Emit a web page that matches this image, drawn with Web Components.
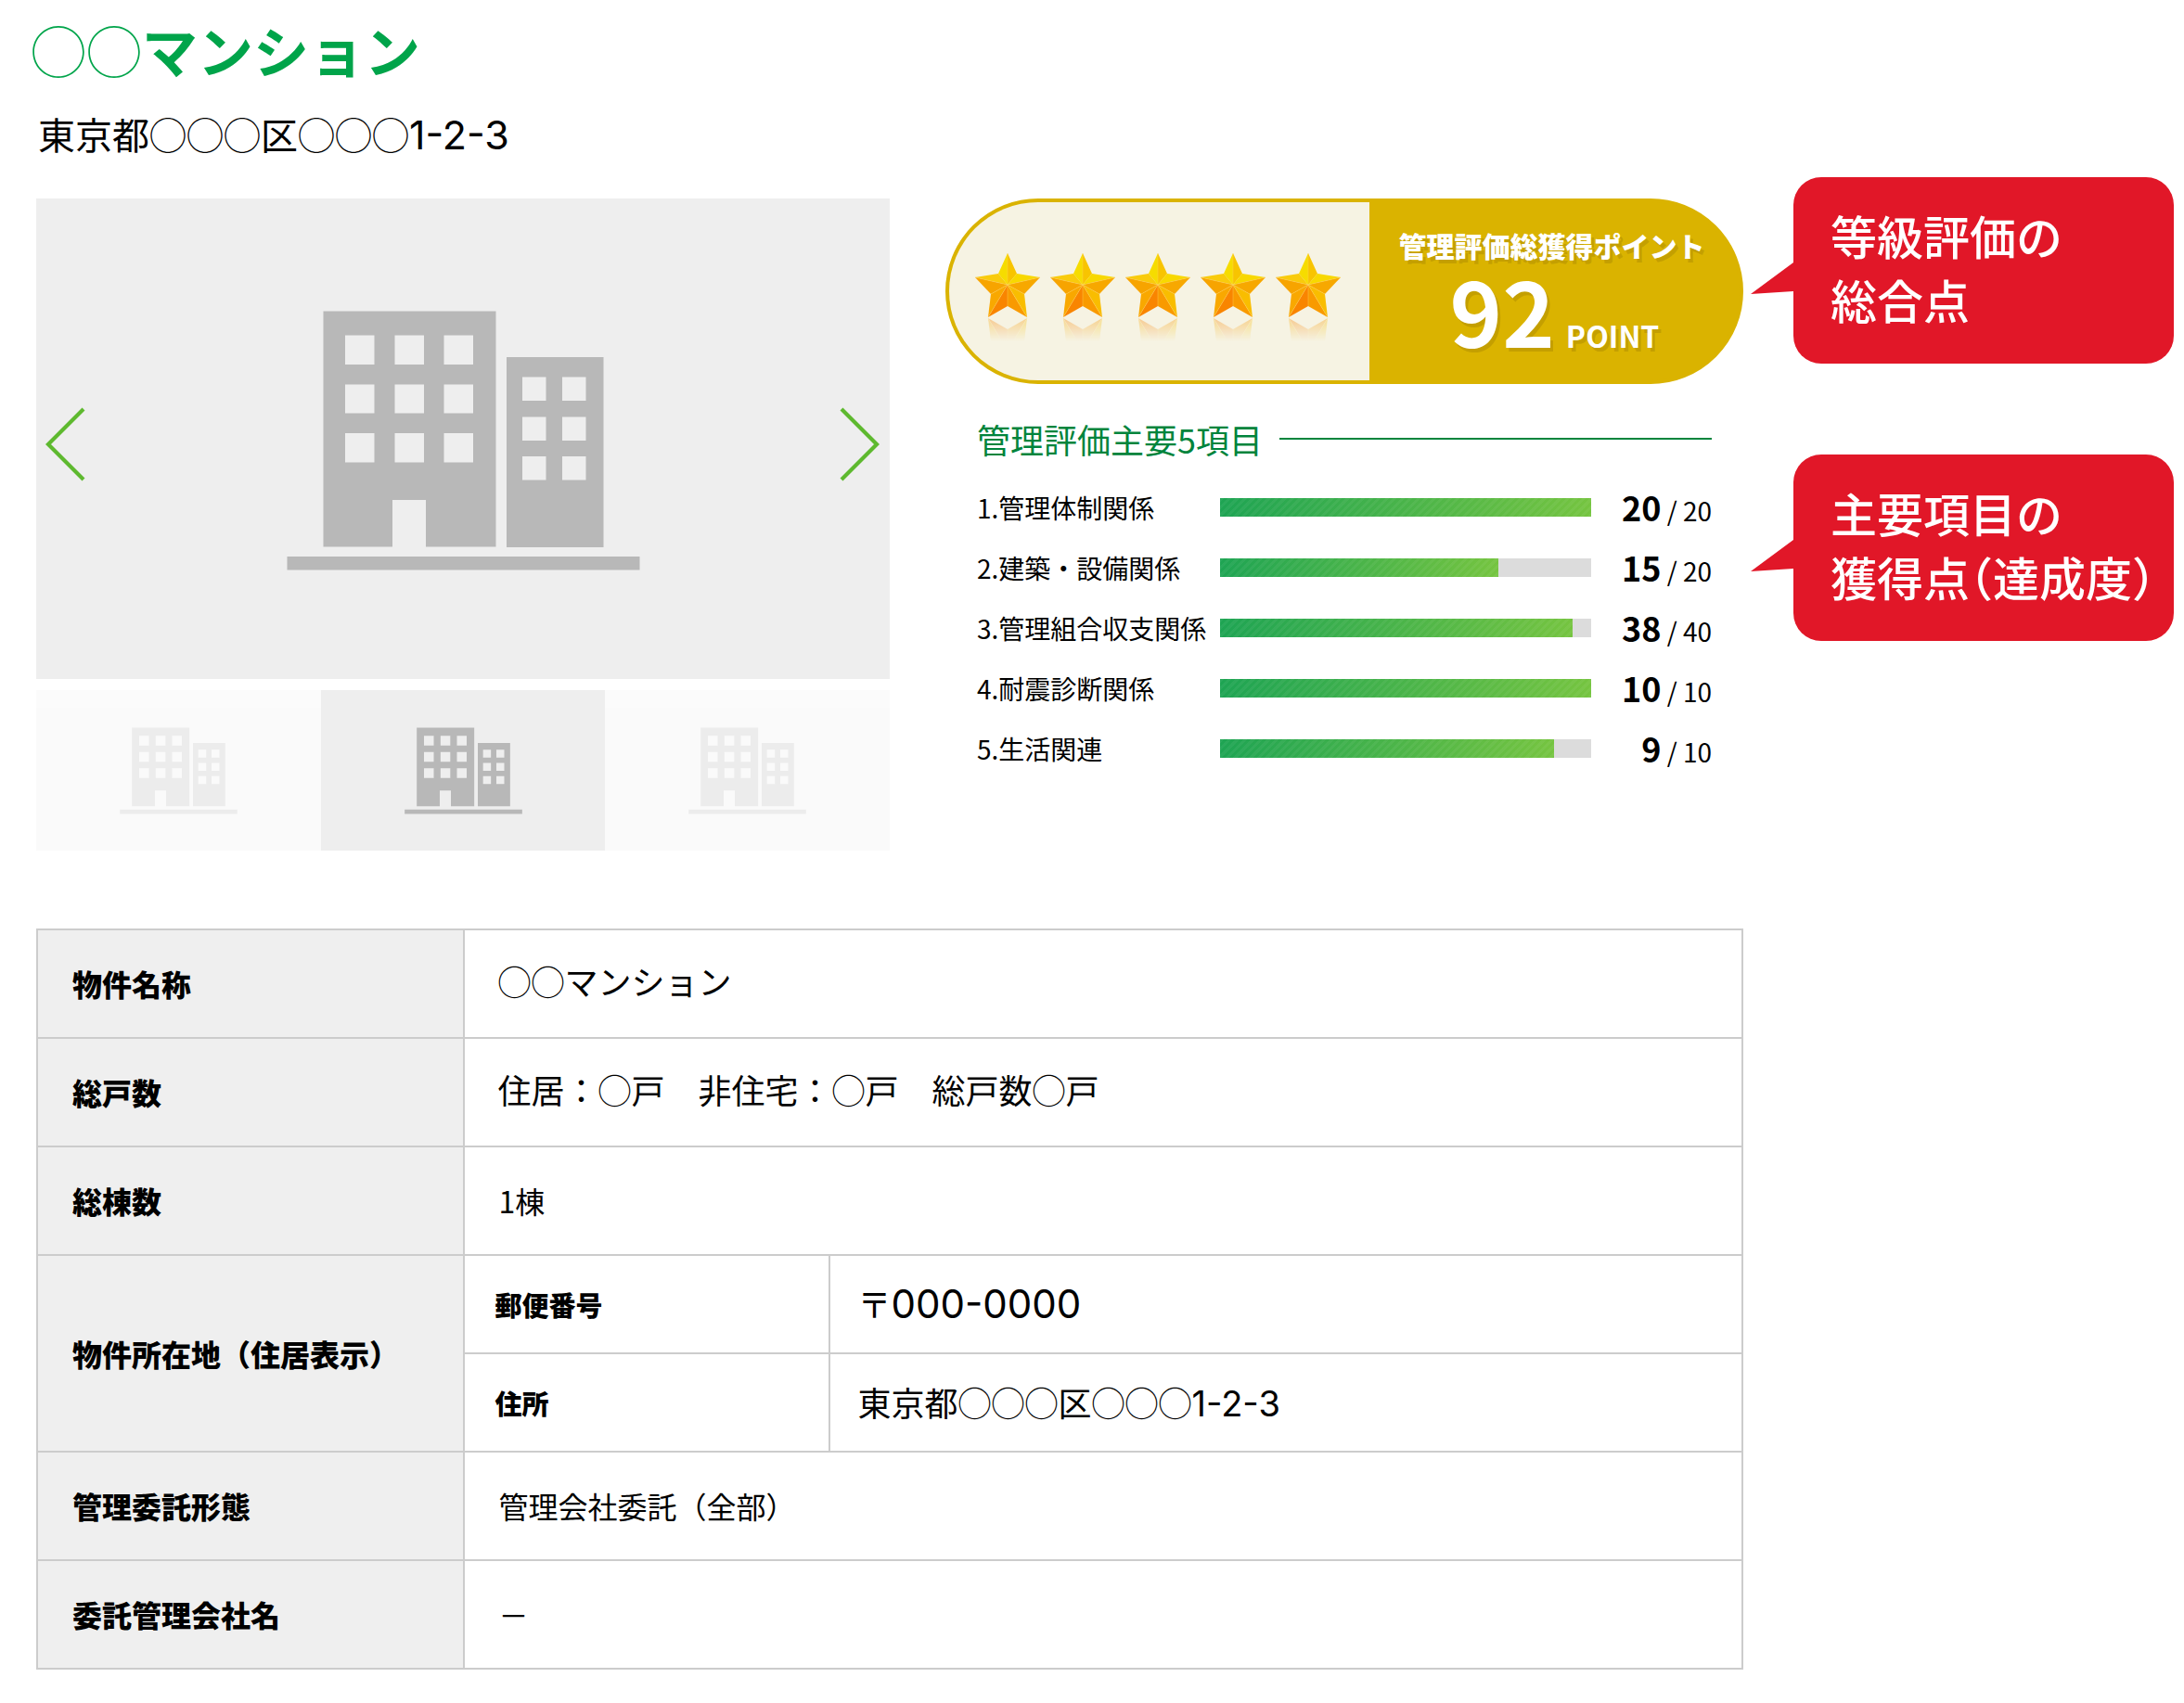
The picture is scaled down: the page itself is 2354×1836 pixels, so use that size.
<!DOCTYPE html>
<html lang="ja">
<head>
<meta charset="utf-8">
<title>◯◯マンション</title>
<style>
  body { margin: 0; background: #fff; color: #000; font-family: "Noto Sans CJK JP", sans-serif; }
</style>
</head>
<body>
<property-page></property-page>

<template id="property-page">
  <style>
    :host { display: grid; grid-template-columns: minmax(0, 1fr) 410px; column-gap: 54px; padding: 0 11px 36px 39px; }
    .top { display: grid; grid-template-columns: 920fr 860fr; column-gap: 60px; margin-bottom: 84px; }
    .num { font-family: Inter, sans-serif; font-size: 43px; }
    aside { display: flex; flex-direction: column; gap: 98px; padding-top: 191px; }
  </style>
  <main>
    <property-heading><span slot="address">東京都◯◯◯区◯◯◯<span class="num">1-2-3</span></span></property-heading>
    <div class="top">
      <photo-gallery></photo-gallery>
      <section>
        <score-badge points="92"></score-badge>
        <rating-list>管理評価主要5項目</rating-list>
      </section>
    </div>
    <property-table></property-table>
  </main>
  <aside>
    <call-out>等級評価の<br>総合点</call-out>
    <call-out>主要項目の<br>獲得点（達成度）</call-out>
  </aside>
</template>

<template id="property-heading">
  <style>
    :host { display: block; height: 214px; box-sizing: border-box; padding-top: 8px; }
    h1 { margin: 0 0 0 -6px; font-size: 60px; line-height: 90px; font-weight: 700; color: #00a44a; }
    h1 span { font-weight: 300; }
    p { margin: 16px 0 0 2px; font-size: 40px; line-height: 60px; }
  </style>
  <h1><span>◯◯</span>マンション</h1>
  <p><slot name="address"></slot></p>
</template>

<template id="building-picture">
  <style>
    :host { display: block; background: #eee; }
    svg { display: block; width: 100%; }
  </style>
  <svg viewBox="0 0 920 518" aria-hidden="true">
    <g transform="translate(270.5 121.5)" fill="#b8b8b8" fill-rule="evenodd">
      <path d="M39 0h186v254h-75.500v-50.500h-36v50.500h-74.500z
        M62.500 26v31.500h31.500v-31.500z M116 26v31.500h31.500v-31.500z M169 26v31.500h31.500v-31.500z
        M62.500 79v31h31.500v-31z M116 79v31h31.500v-31z M169 79v31h31.500v-31z
        M62.500 131.500v31.500h31.500v-31.500z M116 131.500v31.500h31.500v-31.500z M169 131.500v31.500h31.500v-31.500z"/>
      <path d="M236.500 49.500h104.500v205h-104.500z
        M253.500 71v25.500h25.500v-25.500z M296.500 71v25.500h25.500v-25.500z
        M253.500 114v25.500h25.500v-25.500z M296.500 114v25.500h25.500v-25.500z
        M253.500 156.500v25.500h25.500v-25.500z M296.500 156.500v25.500h25.500v-25.500z"/>
      <path d="M0 264.500h380v14.500h-380z"/>
    </g>
  </svg>
</template>

<template id="photo-gallery">
  <style>
    :host { display: block; }
    .stage { position: relative; }
    button { border: 0; padding: 0; margin: 0; background: none; cursor: pointer; display: block; }
    .arrow { position: absolute; top: 220px; width: 48px; height: 90px; }
    .prev { left: 8px; }
    .next { right: 8px; }
    .arrow svg { display: block; width: 100%; height: 100%; }
    .thumbs { display: grid; grid-template-columns: repeat(3, 1fr); margin-top: 12px; }
    .thumbs button { opacity: .25; }
    .thumbs button[aria-current] { opacity: 1; }
  </style>
  <div class="stage">
    <building-picture></building-picture>
    <button class="arrow prev" aria-label="前へ"><svg viewBox="0 0 48 90"><path d="M43 7 5 45 43 83" fill="none" stroke="#5eb92f" stroke-width="4.200"/></svg></button>
    <button class="arrow next" aria-label="次へ"><svg viewBox="0 0 48 90"><path d="M4 7 42 45 4 83" fill="none" stroke="#5eb92f" stroke-width="4.200"/></svg></button>
  </div>
  <div class="thumbs">
    <button aria-label="写真1"><building-picture></building-picture></button>
    <button aria-label="写真2" aria-current="true"><building-picture></building-picture></button>
    <button aria-label="写真3"><building-picture></building-picture></button>
  </div>
</template>

<template id="gold-star">
  <style>
    :host { display: block; width: 72px; height: 96px; }
    svg { display: block; width: 100%; height: 100%; }
  </style>
  <svg viewBox="0 0 72 96" aria-hidden="true">
    <defs>
      <linearGradient id="fade" x1="0" y1="0" x2="0" y2="1">
        <stop offset="0" stop-color="#fff" stop-opacity=".38"/><stop offset="1" stop-color="#fff" stop-opacity="0"/>
      </linearGradient>
      <mask id="m" maskUnits="userSpaceOnUse" x="0" y="70" width="72" height="26"><rect y="70" width="72" height="26" fill="url(#fade)"/></mask>
      <g id="s">
        <path d="M36 1 36 35 26 23z" fill="#f6dc00"/>
        <path d="M36 1 46 23 36 35z" fill="#f8c400"/>
        <path d="M26 23 36 35 1 27z" fill="#f9cb0c"/>
        <path d="M1 27 36 35 18 45z" fill="#f7a400"/>
        <path d="M71 27 36 35 46 23z" fill="#f8d800"/>
        <path d="M71 27 54 45 36 35z" fill="#f7a800"/>
        <path d="M18 45 36 35 15 70z" fill="#f9a800"/>
        <path d="M15 70 36 35 36 58z" fill="#f98500"/>
        <path d="M36 58 36 35 57 70z" fill="#f99a00"/>
        <path d="M57 70 36 35 54 45z" fill="#f9bd00"/>
        <path d="M36 1V58M36 35 15 70M36 35 57 70M36 35 18 45M36 35 54 45M36 35 1 27M36 35 71 27" stroke="#ffd25a" stroke-width=".6" fill="none" opacity=".7"/>
      </g>
    </defs>
    <use href="#s"/>
    <g mask="url(#m)"><use href="#s" transform="matrix(1 0 0 -1 0 141)"/></g>
  </svg>
</template>

<template id="score-badge">
  <style>
    :host { display: flex; box-sizing: border-box; height: 200px; border: 4px solid #dab300; border-radius: 100px; overflow: hidden; background: #dab300; color: #fff; }
    .stars { flex: 452 1 0; display: flex; justify-content: center; align-items: center; gap: 9px; background: #f6f3e3; box-sizing: border-box; padding-top: 12px; padding-right: 2px; }
    .points { flex: 400 1 0; display: flex; flex-direction: column; align-items: center; text-shadow: 3px 4px 0 rgba(120, 90, 0, .22); font-weight: 700; }
    h2 { margin: 24px 6px 0 0; font-size: 30px; line-height: 44px; font-weight: 900; white-space: nowrap; }
    p { display: flex; align-items: baseline; gap: 12px; margin: 0; line-height: 96px; font-size: 32px; white-space: nowrap; }
    b { font-size: 96px; font-weight: 700; }
  </style>
  <div class="stars" role="img" aria-label="5つ星"><gold-star></gold-star><gold-star></gold-star><gold-star></gold-star><gold-star></gold-star><gold-star></gold-star></div>
  <div class="points"><h2>管理評価総獲得ポイント</h2><p><b></b>POINT</p></div>
</template>

<template id="rating-list">
  <style>
    :host { display: block; padding: 0 34px; }
    h2 { display: flex; align-items: center; gap: 18px; margin: 31px 0 13px; font-size: 36px; line-height: 56px; font-weight: 400; color: #00843c; white-space: nowrap; }
    h2::after { content: ""; flex: 1; height: 2px; background: #00843c; }
  </style>
  <h2><slot></slot></h2>
  <rating-row label="1.管理体制関係" score="20" max="20"></rating-row>
  <rating-row label="2.建築・設備関係" score="15" max="20"></rating-row>
  <rating-row label="3.管理組合収支関係" score="38" max="40"></rating-row>
  <rating-row label="4.耐震診断関係" score="10" max="10"></rating-row>
  <rating-row label="5.生活関連" score="9" max="10"></rating-row>
</template>

<template id="rating-row">
  <style>
    :host { display: grid; grid-template-columns: 262px 1fr 130px; align-items: center; height: 65px; font-size: 28px; line-height: 40px; white-space: nowrap; }
    .bar { height: 20px; background: #dcdcdc; }
    .fill { height: 100%; background: repeating-linear-gradient(135deg, rgba(255,255,255,.05) 0 3px, transparent 3px 6px), linear-gradient(90deg, #1ea453, #75c440); }
    .score { text-align: right; padding-top: 2px; }
    b { font-size: 36px; }
  </style>
  <span class="label"></span>
  <div class="bar" role="meter" aria-valuemin="0"><div class="fill"></div></div>
  <span class="score"><b></b> / <span class="max"></span></span>
</template>

<template id="call-out">
  <style>
    :host { display: block; position: relative; box-sizing: border-box; padding: 28px 0 35px 40px; border-radius: 30px; background: #e11728; color: #fff; font-size: 50px; line-height: 69px; font-weight: 500; white-space: nowrap; font-feature-settings: "halt"; }
    svg { position: absolute; right: 100%; top: 92px; width: 46px; height: 35px; }
  </style>
  <svg viewBox="0 0 46 35" aria-hidden="true"><path d="M46 0 0 34 46 31z" fill="#e11728"/></svg>
  <slot></slot>
</template>

<template id="property-table">
  <style>
    :host { display: block; }
    table { width: 100%; border-collapse: collapse; table-layout: fixed; }
    th, td { border: 2px solid #ccc; box-sizing: border-box; padding: 0 30px 0 37px; height: 117px; text-align: left; vertical-align: middle; font-size: 32px; line-height: 48px; font-weight: 400; }
    th { background: #efefef; font-weight: 900; }
    td.large { padding: 0 30px 6px 36px; }
    .large { font-size: 36px; }
    .sub th, .sub td { height: 106px; }
    .sub .inner { background: none; font-size: 29px; padding-left: 33px; }
    .sub .inner + td { padding: 0 30px; }
    .num { font-family: Inter, sans-serif; font-size: 38px; }
    .zip { font-family: Inter, sans-serif; font-size: 42px; }
    .c1 { width: 25%; } .c2 { width: 394px; }
  </style>
  <table>
    <colgroup><col class="c1"><col class="c2"><col></colgroup>
    <tr><th scope="row">物件名称</th><td colspan="2" class="large">◯◯マンション</td></tr>
    <tr><th scope="row">総戸数</th><td colspan="2" class="large">住居：◯戸　非住宅：◯戸　総戸数◯戸</td></tr>
    <tr><th scope="row">総棟数</th><td colspan="2">1棟</td></tr>
    <tr class="sub"><th scope="rowgroup" rowspan="2">物件所在地（住居表示）</th><th class="inner" scope="row">郵便番号</th><td class="large">〒<span class="zip">000-0000</span></td></tr>
    <tr class="sub"><th class="inner" scope="row">住所</th><td class="large">東京都◯◯◯区◯◯◯<span class="num">1-2-3</span></td></tr>
    <tr><th scope="row">管理委託形態</th><td colspan="2">管理会社委託（全部）</td></tr>
    <tr><th scope="row">委託管理会社名</th><td colspan="2">－</td></tr>
  </table>
</template>

<script>
  class TemplateElement extends HTMLElement {
    connectedCallback() {
      if (this.shadowRoot) return;
      const root = this.attachShadow({ mode: 'open' });
      root.append(document.getElementById(this.localName).content.cloneNode(true));
      this.fill(root);
    }
    fill() {}
  }
  class ScoreBadge extends TemplateElement {
    fill(root) { root.querySelector('b').textContent = this.getAttribute('points'); }
  }
  class RatingRow extends TemplateElement {
    fill(root) {
      const label = this.getAttribute('label');
      const score = this.getAttribute('score');
      const max = this.getAttribute('max');
      const bar = root.querySelector('.bar');
      root.querySelector('.label').textContent = label;
      root.querySelector('b').textContent = score;
      root.querySelector('.max').textContent = max;
      root.querySelector('.fill').style.width = (score / max * 100) + '%';
      bar.setAttribute('aria-label', label);
      bar.setAttribute('aria-valuenow', score);
      bar.setAttribute('aria-valuemax', max);
    }
  }
  customElements.define('score-badge', ScoreBadge);
  customElements.define('rating-row', RatingRow);
  for (const name of ['property-heading', 'building-picture', 'photo-gallery', 'gold-star', 'rating-list', 'call-out', 'property-table', 'property-page']) {
    customElements.define(name, class extends TemplateElement {});
  }
</script>
</body>
</html>
